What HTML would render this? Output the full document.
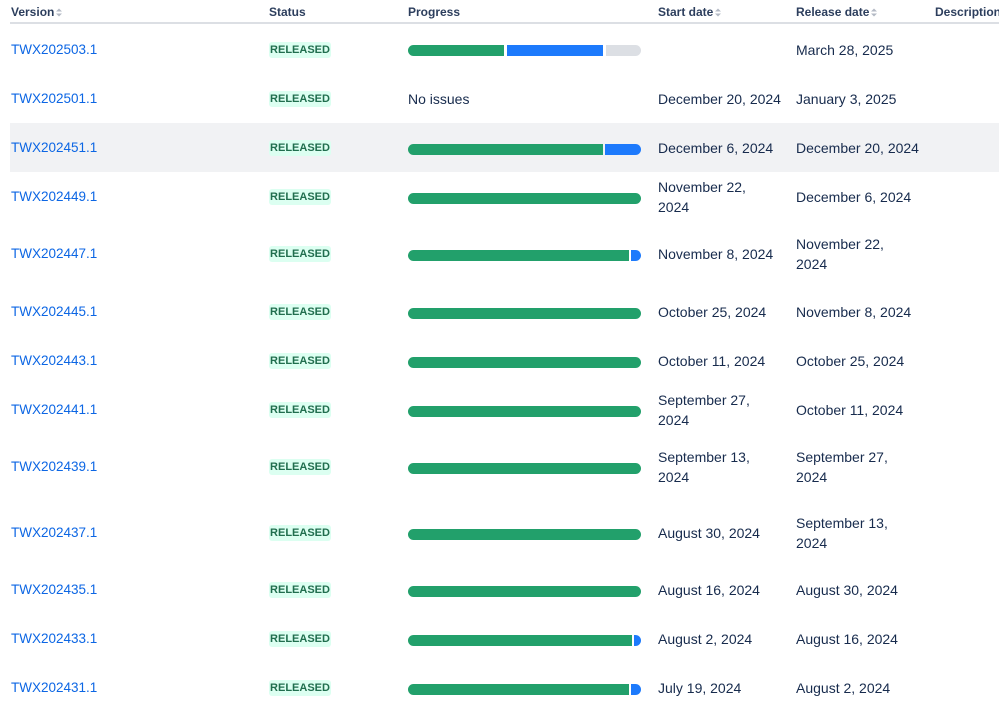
<!DOCTYPE html>
<html><head><meta charset="utf-8"><style>
*{margin:0;padding:0;box-sizing:border-box}
body{width:999px;height:718px;overflow:hidden;background:#fff;font-family:"Liberation Sans",Arial,sans-serif;color:#172b4d;position:relative}
.a{position:absolute;white-space:nowrap}
.h{font-size:12px;font-weight:bold;color:#2c3e5d;top:5px}
.line{position:absolute;left:10px;right:0;top:22px;height:2px;background:#dcdfe4}
.v{font-size:13.5px;color:#0c66e4;left:11px;margin-top:1px}
.b{left:269px;width:62px;height:16px;background:#dcfff1;border-radius:3px;color:#216e4e;font-size:11px;font-weight:bold;text-align:center;line-height:16px}
.t{font-size:14px;line-height:20px}
.bar{position:absolute;height:11px;left:408px;width:233px}
.bar span{position:absolute;top:0;height:11px}
.g{background:#22a06b}.bl{background:#1d7afc}.gr{background:#dcdfe4}
.sort{display:inline-block;vertical-align:middle;margin-left:2px}
</style></head><body>
<div class="a h" style="left:11px">Version<svg class="sort" width="6" height="9"><path d="M0 3.5L3 0.5L6 3.5ZM0 5.5L3 8.5L6 5.5Z" fill="#b3b9c4"/></svg></div>
<div class="a h" style="left:269px">Status</div>
<div class="a h" style="left:408px">Progress</div>
<div class="a h" style="left:658px">Start date<svg class="sort" width="6" height="9"><path d="M0 3.5L3 0.5L6 3.5ZM0 5.5L3 8.5L6 5.5Z" fill="#b3b9c4"/></svg></div>
<div class="a h" style="left:796px">Release date<svg class="sort" width="6" height="9"><path d="M0 3.5L3 0.5L6 3.5ZM0 5.5L3 8.5L6 5.5Z" fill="#b3b9c4"/></svg></div>
<div class="a h" style="left:935px">Description</div>
<div class="line"></div>
<div class="a" style="left:10px;right:0;top:123px;height:49px;background:#f1f2f4"></div>

<div class="a v" style="top:41px">TWX202503.1</div><div class="a b" style="top:42px">RELEASED</div>
<div class="bar" style="top:45px"><span class="g" style="left:0;width:96px;border-radius:6px 0 0 6px"></span><span class="bl" style="left:99px;width:96px"></span><span class="gr" style="left:198px;width:35px;border-radius:0 6px 6px 0"></span></div>
<div class="a t" style="left:796px;top:40px">March 28, 2025</div>

<div class="a v" style="top:90px">TWX202501.1</div><div class="a b" style="top:91px">RELEASED</div>
<div class="a t" style="left:408px;top:89px">No issues</div>
<div class="a t" style="left:658px;top:89px">December 20, 2024</div><div class="a t" style="left:796px;top:89px">January 3, 2025</div>

<div class="a v" style="top:139px">TWX202451.1</div><div class="a b" style="top:140px">RELEASED</div>
<div class="bar" style="top:144px"><span class="g" style="left:0;width:195px;border-radius:6px 0 0 6px"></span><span class="bl" style="left:197px;width:36px;border-radius:0 6px 6px 0"></span></div>
<div class="a t" style="left:658px;top:138px">December 6, 2024</div><div class="a t" style="left:796px;top:138px">December 20, 2024</div>

<div class="a v" style="top:188px">TWX202449.1</div><div class="a b" style="top:189px">RELEASED</div>
<div class="bar" style="top:193px"><span class="g" style="left:0;width:233px;border-radius:6px"></span></div>
<div class="a t" style="left:658px;top:177px">November 22,<br>2024</div><div class="a t" style="left:796px;top:187px">December 6, 2024</div>

<div class="a v" style="top:245px">TWX202447.1</div><div class="a b" style="top:246px">RELEASED</div>
<div class="bar" style="top:250px"><span class="g" style="left:0;width:221px;border-radius:6px 0 0 6px"></span><span class="bl" style="left:223px;width:10px;border-radius:0 6px 6px 0"></span></div>
<div class="a t" style="left:658px;top:244px">November 8, 2024</div><div class="a t" style="left:796px;top:234px">November 22,<br>2024</div>

<div class="a v" style="top:303px">TWX202445.1</div><div class="a b" style="top:304px">RELEASED</div>
<div class="bar" style="top:308px"><span class="g" style="left:0;width:233px;border-radius:6px"></span></div>
<div class="a t" style="left:658px;top:302px">October 25, 2024</div><div class="a t" style="left:796px;top:302px">November 8, 2024</div>

<div class="a v" style="top:352px">TWX202443.1</div><div class="a b" style="top:353px">RELEASED</div>
<div class="bar" style="top:357px"><span class="g" style="left:0;width:233px;border-radius:6px"></span></div>
<div class="a t" style="left:658px;top:351px">October 11, 2024</div><div class="a t" style="left:796px;top:351px">October 25, 2024</div>

<div class="a v" style="top:401px">TWX202441.1</div><div class="a b" style="top:402px">RELEASED</div>
<div class="bar" style="top:406px"><span class="g" style="left:0;width:233px;border-radius:6px"></span></div>
<div class="a t" style="left:658px;top:390px">September 27,<br>2024</div><div class="a t" style="left:796px;top:400px">October 11, 2024</div>

<div class="a v" style="top:458px">TWX202439.1</div><div class="a b" style="top:459px">RELEASED</div>
<div class="bar" style="top:463px"><span class="g" style="left:0;width:233px;border-radius:6px"></span></div>
<div class="a t" style="left:658px;top:447px">September 13,<br>2024</div><div class="a t" style="left:796px;top:447px">September 27,<br>2024</div>

<div class="a v" style="top:524px">TWX202437.1</div><div class="a b" style="top:525px">RELEASED</div>
<div class="bar" style="top:529px"><span class="g" style="left:0;width:233px;border-radius:6px"></span></div>
<div class="a t" style="left:658px;top:523px">August 30, 2024</div><div class="a t" style="left:796px;top:513px">September 13,<br>2024</div>

<div class="a v" style="top:581px">TWX202435.1</div><div class="a b" style="top:582px">RELEASED</div>
<div class="bar" style="top:586px"><span class="g" style="left:0;width:233px;border-radius:6px"></span></div>
<div class="a t" style="left:658px;top:580px">August 16, 2024</div><div class="a t" style="left:796px;top:580px">August 30, 2024</div>

<div class="a v" style="top:630px">TWX202433.1</div><div class="a b" style="top:631px">RELEASED</div>
<div class="bar" style="top:635px"><span class="g" style="left:0;width:224px;border-radius:6px 0 0 6px"></span><span class="bl" style="left:226px;width:7px;border-radius:0 6px 6px 0"></span></div>
<div class="a t" style="left:658px;top:629px">August 2, 2024</div><div class="a t" style="left:796px;top:629px">August 16, 2024</div>

<div class="a v" style="top:679px">TWX202431.1</div><div class="a b" style="top:680px">RELEASED</div>
<div class="bar" style="top:684px"><span class="g" style="left:0;width:221px;border-radius:6px 0 0 6px"></span><span class="bl" style="left:223px;width:10px;border-radius:0 6px 6px 0"></span></div>
<div class="a t" style="left:658px;top:678px">July 19, 2024</div><div class="a t" style="left:796px;top:678px">August 2, 2024</div>
</body></html>
